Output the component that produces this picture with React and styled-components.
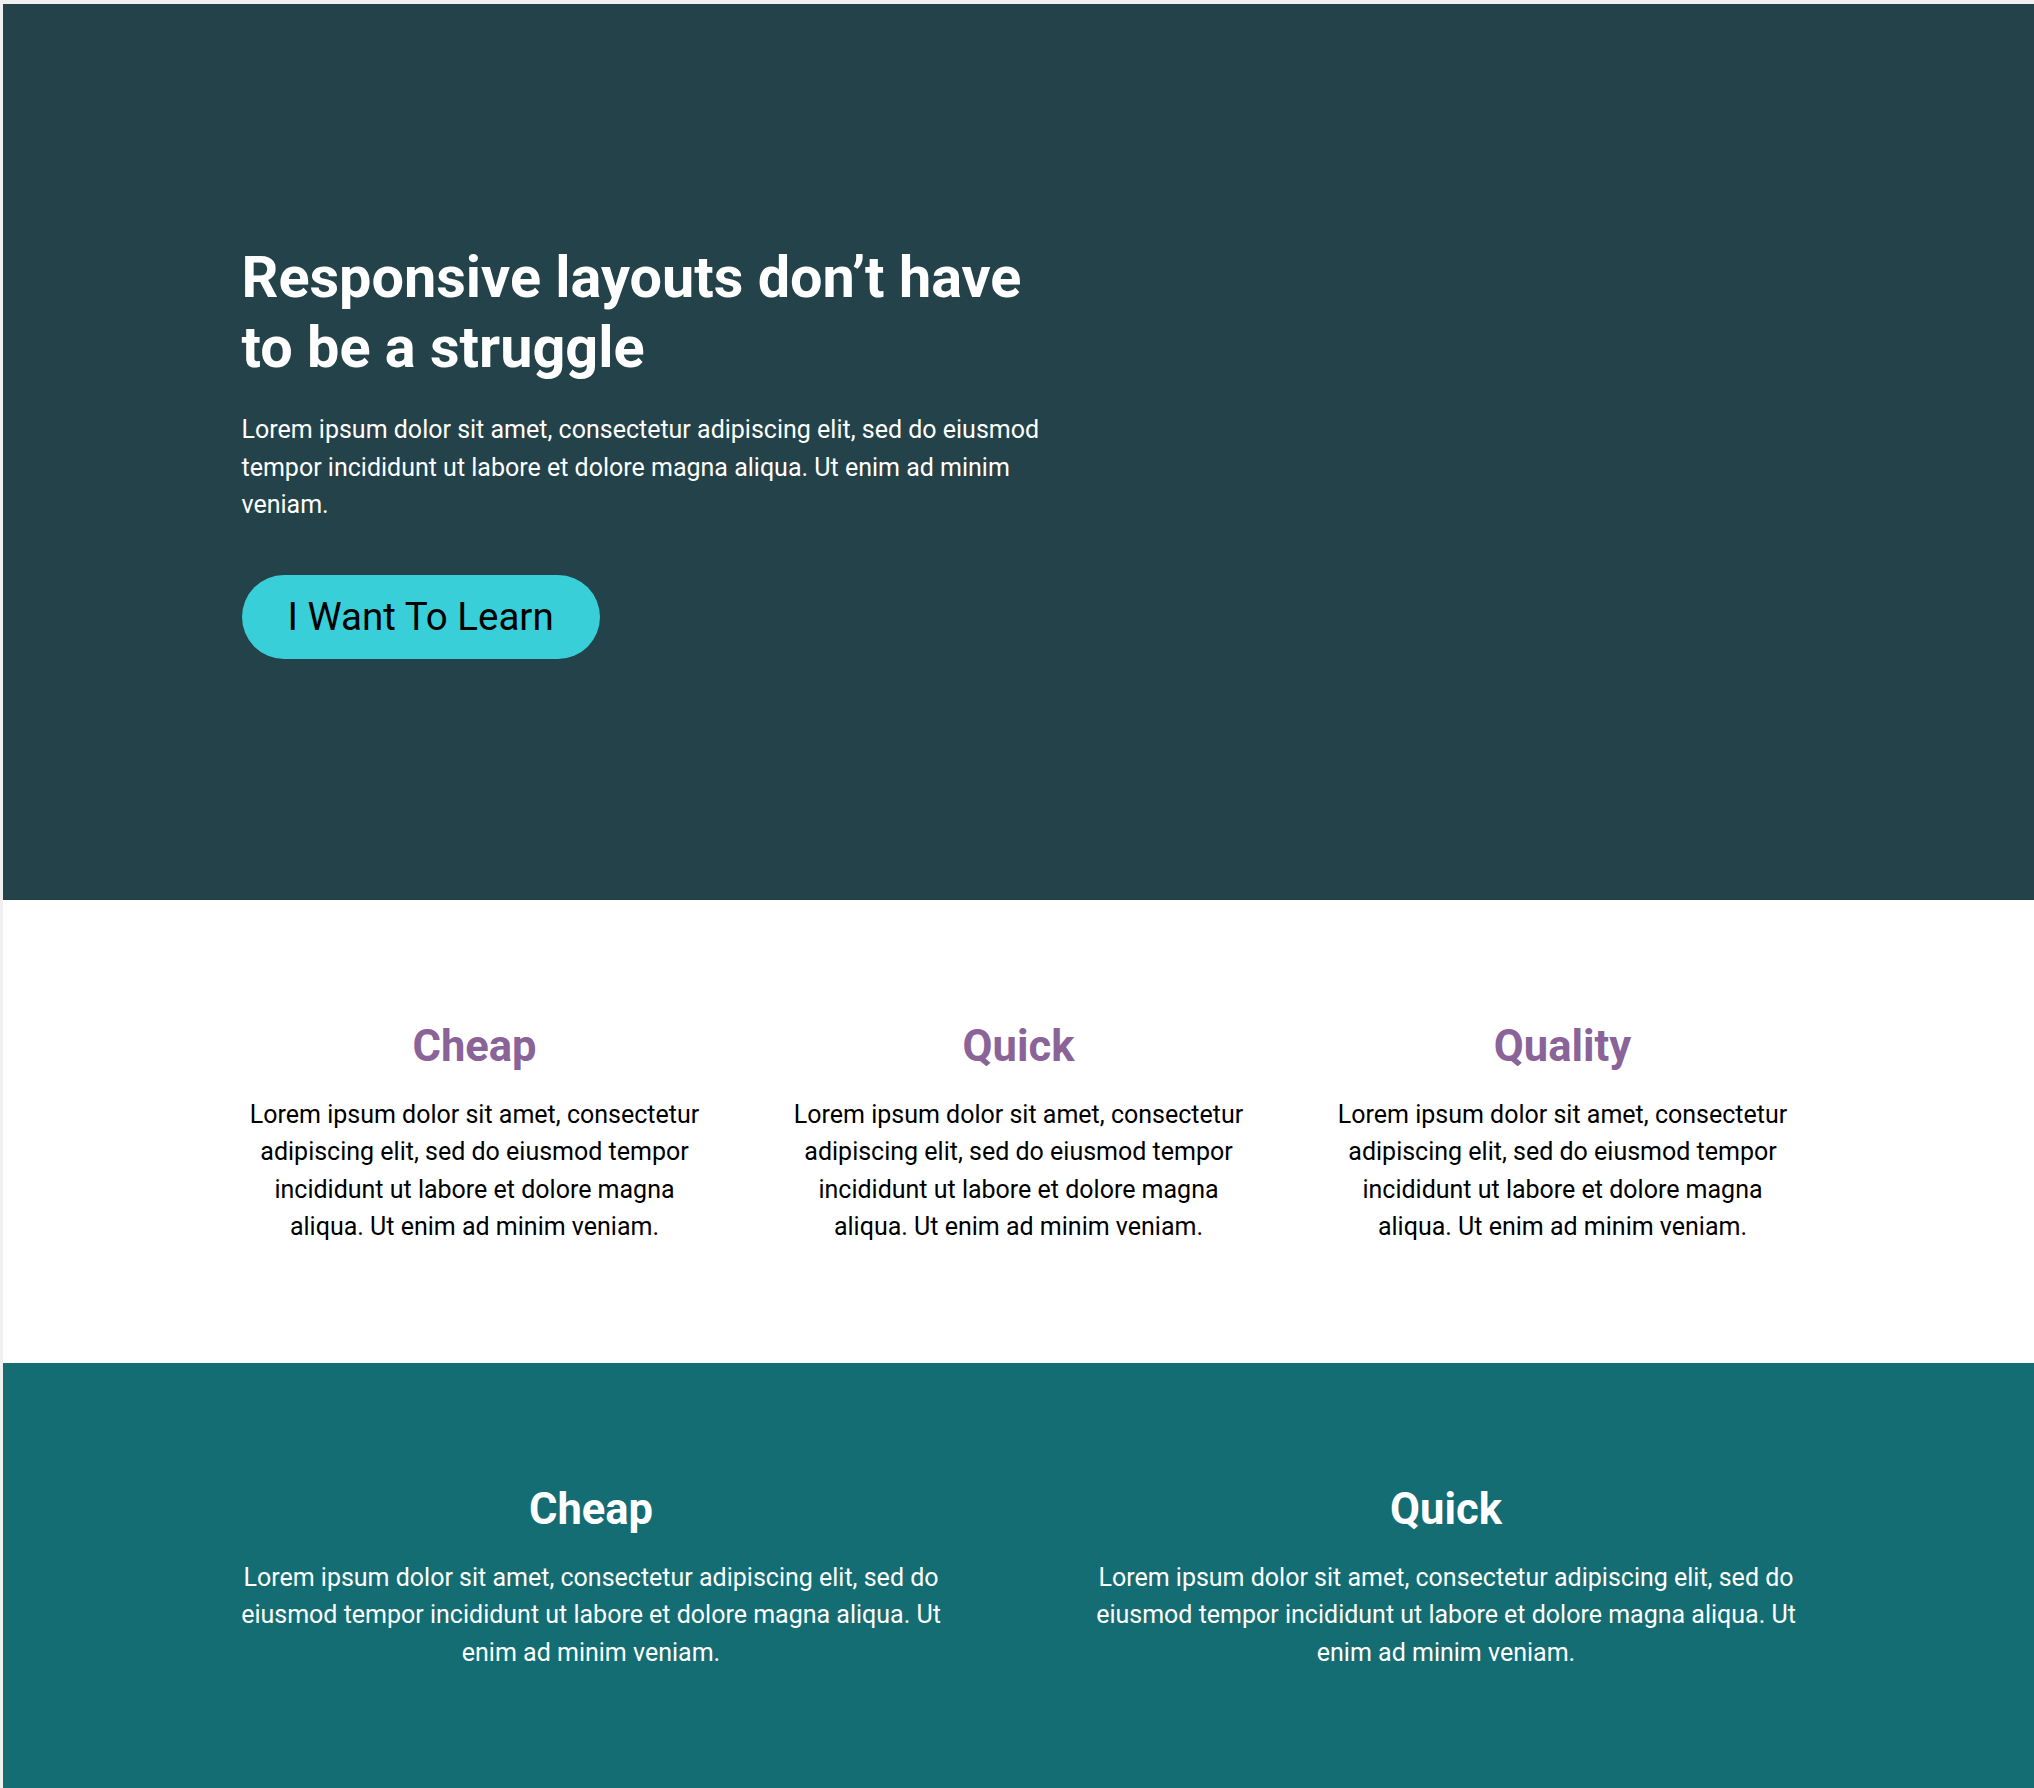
import styled, { createGlobalStyle } from 'styled-components';

const GlobalStyle = createGlobalStyle`
	* {
		box-sizing: border-box;
	}
	body {
		margin: 0;
		padding: 4px 0 0 3px;
		background: #f0f0f0;
		font-family: Roboto, "Liberation Sans", sans-serif;
	}
	h1, h2, p {
		margin: 0;
	}
`;

const Page = styled.main`
	background: #ffffff;
`;

const Container = styled.div`
	width: 1554px;
	margin: 0 auto;
`;

const Hero = styled.section`
	background: #244249;
	color: #ffffff;
	padding: 239px 0 241px;
`;

const HeroContent = styled.div`
	width: 830px;
`;

const HeroTitle = styled.h1`
	font-size: 57.6px;
	font-weight: 700;
	line-height: 70px;
	margin-bottom: 28px;
`;

const Text = styled.p`
	font-size: 25px;
	line-height: 37.5px;
	font-weight: 400;
	color: ${(props) => props.color || '#000000'};
	text-align: ${(props) => props.align || 'left'};
	margin: 0 ${(props) => props.bleed || 0}px;
`;

const LearnButton = styled.button`
	margin-top: 51px;
	height: 84px;
	padding: 0 46px;
	border: none;
	border-radius: 42px;
	background: #38cfd8;
	color: #000000;
	font-family: Roboto, "Liberation Sans", sans-serif;
	font-size: 38.5px;
	font-weight: 400;
	cursor: pointer;
`;

const Section = styled.section`
	background: ${(props) => props.bg};
	padding: 120px 0 ${(props) => props.bottom || 120}px;
`;

const Columns = styled.div`
	display: grid;
	grid-template-columns: repeat(${(props) => props.count}, 1fr);
	column-gap: ${(props) => props.gap}px;
`;

const Feature = styled.div`
	text-align: center;
`;

const FeatureTitle = styled.h2`
	font-size: 43.5px;
	line-height: 54px;
	font-weight: 700;
	color: ${(props) => props.color};
	margin-bottom: 22px;
`;

const lorem =
	'Lorem ipsum dolor sit amet, consectetur adipiscing elit, sed do eiusmod tempor incididunt ut labore et dolore magna aliqua. Ut enim ad minim veniam.';

const features = ['Cheap', 'Quick', 'Quality'];
const highlights = ['Cheap', 'Quick'];

const App = () => {
	return (
		<Page>
			<GlobalStyle />
			<Hero>
				<Container>
					<HeroContent>
						<HeroTitle>Responsive layouts don’t have to be a struggle</HeroTitle>
						<Text color="#ffffff">{lorem}</Text>
						<LearnButton>I Want To Learn</LearnButton>
					</HeroContent>
				</Container>
			</Hero>
			<Section bg="#ffffff" bottom={117}>
				<Container>
					<Columns count={3} gap={78}>
						{features.map((title) => (
							<Feature key={title}>
								<FeatureTitle color="#8a6399">{title}</FeatureTitle>
								<Text align="center">{lorem}</Text>
							</Feature>
						))}
					</Columns>
				</Container>
			</Section>
			<Section bg="#146d72">
				<Container>
					<Columns count={2} gap={156}>
						{highlights.map((title) => (
							<Feature key={title}>
								<FeatureTitle color="#ffffff">{title}</FeatureTitle>
								<Text color="#ffffff" align="center" bleed={-4}>
									{lorem}
								</Text>
							</Feature>
						))}
					</Columns>
				</Container>
			</Section>
		</Page>
	);
};

export default App;
